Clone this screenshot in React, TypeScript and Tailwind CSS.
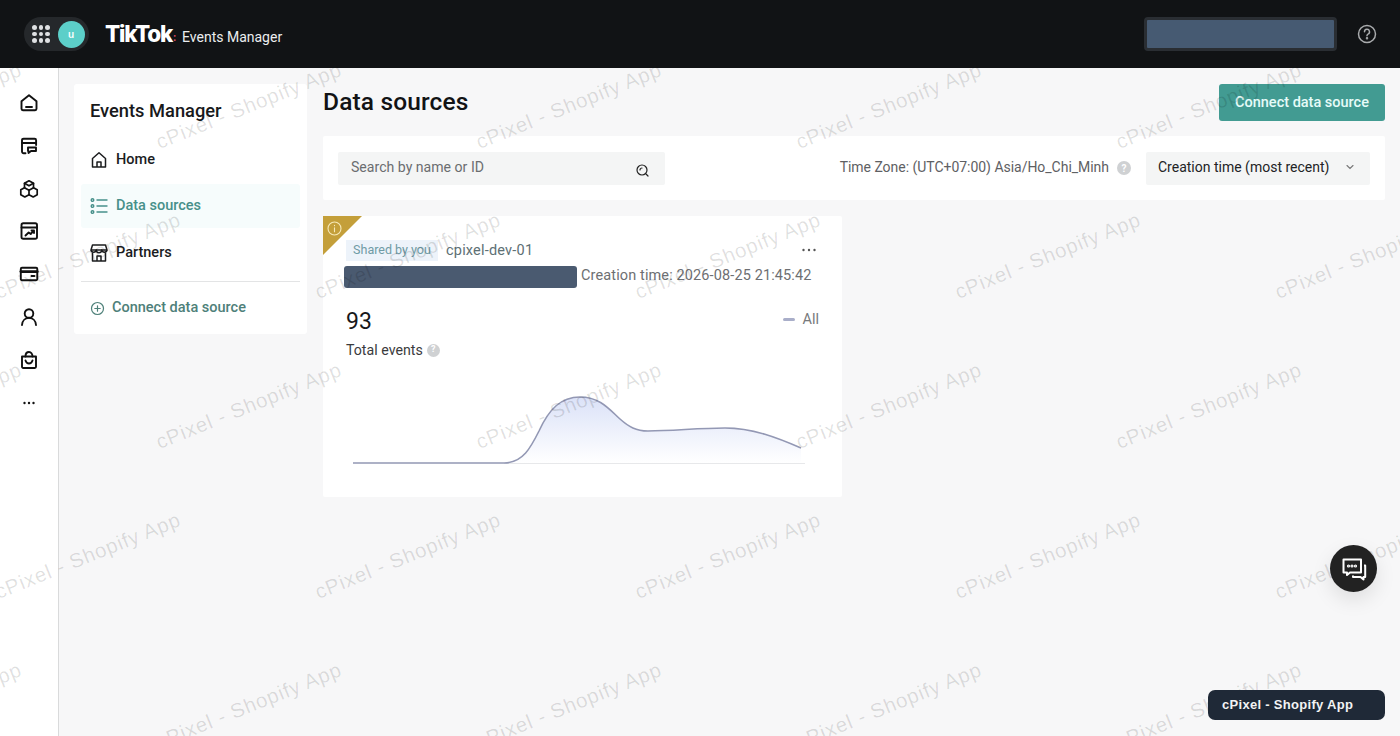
import React from "react";

const marks: [number, number][] = [];
for (let r = -1; r < 6; r++) {
  const odd = ((r % 2) + 2) % 2 === 1;
  for (let c = -1; c < 6; c++) {
    marks.push([(odd ? 88 : 249) + c * 320, 106 + r * 150]);
  }
}

function I({ children, s = 20, w = 1.9 }: { children: React.ReactNode; s?: number; w?: number }) {
  return (
    <svg width={s} height={s} viewBox="0 0 20 20" fill="none" stroke="currentColor" strokeWidth={w} strokeLinecap="round" strokeLinejoin="round">
      {children}
    </svg>
  );
}

const rail: React.ReactNode[] = [
  <I key="a"><path d="M2.500 8.300 10 2.300l7.500 6v7.500a1.400 1.400 0 0 1-1.400 1.400H3.900a1.400 1.400 0 0 1-1.400-1.400z" /><path d="M7 14h6" /></I>,
  <I key="b"><path d="M6.500 17.300H4.800A1.700 1.700 0 0 1 3 15.600V4.200c0-.9.700-1.500 1.600-1.500h11c.9 0 1.500.6 1.500 1.500V9" /><path d="M3 7h14" /><path d="M9 11.500h8v3.500h-5l-2.500 2v-2H9z" /></I>,
  <I key="c" w={1.7}><path d="M10 1.800 14.500 4.300v4.400L10 11.200 5.500 8.700V4.300z" /><path d="M5.500 8.700 1.800 10.800v4.900L5.800 18l4.200-2.300v-4.500" /><path d="M14.500 8.700l3.700 2.100v4.900L14.200 18 10 15.700" /><path d="M5.500 4.300 10 6.800l4.500-2.500" /></I>,
  <I key="d"><rect x="2.500" y="2.300" width="15.500" height="15.500" rx="1.800" /><path d="M2.500 6.500h15.500" /><path d="m6.500 14.500 3.200-3 2 1.500 3-3.300M12.500 9.500H15V12" /></I>,
  <I key="e"><rect x="1.800" y="3.800" width="16.500" height="12.500" rx="1.200" /><path d="M1.800 7.600h16.500" strokeWidth="2.600" /><path d="M12.500 12h3" /></I>,
  <I key="f"><circle cx="10" cy="6.500" r="4.300" /><path d="M3 18c.3-4.300 3.200-7.100 7-7.100s6.700 2.800 7 7.100" /></I>,
  <I key="g"><path d="M3 6.500h14v10.300a1.200 1.200 0 0 1-1.200 1.200H4.200A1.200 1.200 0 0 1 3 16.800z" /><path d="M6.500 6.500C6.500 3.800 8 2 10 2s3.500 1.800 3.500 4.500" /><path d="M6.500 10.500c.6 2 1.800 3 3.500 3s2.900-1 3.500-3" /></I>,
  <svg key="h" width="20" height="20" viewBox="0 0 20 20" fill="currentColor"><circle cx="5.500" cy="10" r="1.200" /><circle cx="10" cy="10" r="1.200" /><circle cx="14.500" cy="10" r="1.200" /></svg>,
];

function Help({ s = 14 }: { s?: number }) {
  return (
    <span className="flex items-center justify-center rounded-full bg-[#cfd1d3] font-bold text-white" style={{ width: s, height: s, fontSize: s - 4 }}>
      ?
    </span>
  );
}

export default function App() {
  return (
    <div className="relative flex h-[736px] w-[1400px] flex-col overflow-hidden bg-[#f7f7f8] font-['Roboto',sans-serif]">
      <header className="relative z-20 flex h-[68px] shrink-0 items-center justify-between bg-[#111315] pl-6 pr-[23px]">
        <div className="flex items-center">
          <div className="flex h-[34px] w-[65px] items-center rounded-full bg-[#25282b] pl-[8px]">
            <div className="grid grid-cols-3 gap-[2px]">
              {Array.from({ length: 9 }).map((_, i) => (
                <span key={i} className="h-[4.500px] w-[4.500px] rounded-full bg-[#dfe1e3]" />
              ))}
            </div>
            <div className="ml-[8px] flex h-[27px] w-[27px] items-center justify-center rounded-full bg-[#5ccfc9] font-['Inter',sans-serif] text-[10px] font-semibold text-white">
              u
            </div>
          </div>
          <span className="ml-4 font-['Inter',sans-serif] text-[22.500px] leading-none font-extrabold tracking-[-1.200px] text-white">TikTok</span>
          <span className="ml-[1px] mt-[8px] text-[10px] leading-none font-bold text-[#e8506a]">:</span>
          <span className="ml-[6px] mt-[5px] text-[14px] leading-none text-[#eceeef]">Events Manager</span>
        </div>
        <div className="flex items-center gap-[20px]">
          <div className="h-[34px] w-[193px] rounded-[4px] border-[3px] border-[#2a2e33] bg-[#465a72]" />
          <svg width="20" height="20" viewBox="0 0 20 20" fill="none" stroke="#a9abad" strokeWidth="1.500" strokeLinecap="round">
            <circle cx="10" cy="10" r="8.500" />
            <path d="M7.500 7.800A2.500 2.500 0 1 1 11 10.100c-.7.3-1 .8-1 1.600" />
            <circle cx="10" cy="14.300" r=".5" />
          </svg>
        </div>
      </header>

      <div className="flex min-h-0 flex-1">
        <nav className="z-0 flex w-[59px] shrink-0 flex-col items-center gap-[22.800px] border-r border-[#d9dadb] bg-white pt-[25px] text-[#111]">
          {rail.map((x, i) => (
            <div key={i} className="flex h-5 w-5 items-center justify-center">{x}</div>
          ))}
        </nav>

        <aside className="ml-[15px] mt-4 h-[250px] w-[233px] shrink-0 rounded-[3px] bg-white px-[7px] pt-[15px]">
          <h2 className="pl-[9px] text-[18.300px] leading-6 font-medium text-[#18191b]">Events Manager</h2>
          <div className="mt-[14px] flex h-[44px] items-center gap-[8px] pl-[9px] pt-[1px] text-[14.500px] font-medium text-[#1b1c1e]">
            <svg width="18" height="18" viewBox="0 0 18 18" fill="none" stroke="currentColor" strokeWidth="1.500" strokeLinejoin="round"><path d="M2.500 7.500 9 1.800l6.500 5.700V16h-13z" /><path d="M7 16v-5h4v5" /></svg>
            Home
          </div>
          <div className="mt-[3px] flex h-[44px] items-center gap-[8px] rounded-[3px] bg-[#f6fcfc] pl-[9px] text-[14.500px] font-medium text-[#47908a]">
            <svg width="18" height="18" viewBox="0 0 18 18" fill="none" stroke="currentColor" strokeWidth="1.400" strokeLinecap="round"><circle cx="2.500" cy="3" r="1.300" /><circle cx="2.500" cy="9" r="1.300" /><circle cx="2.500" cy="15" r="1.300" /><path d="M7 3h10M7 9h10M7 15h10" /></svg>
            Data sources
          </div>
          <div className="mt-[3px] flex h-[44px] items-center gap-[8px] pl-[9px] text-[14.500px] font-medium text-[#1b1c1e]">
            <svg width="18" height="20" viewBox="0 0 18 20" fill="none" stroke="currentColor" strokeWidth="1.500" strokeLinejoin="round"><path d="M2.500 2h13l1.500 5H1z" /><path d="M1 7a2.700 2.700 0 0 0 5.300 0 2.700 2.700 0 0 0 5.400 0 2.700 2.700 0 0 0 5.300 0" /><path d="M2.500 9.500V18h13V9.500" /><path d="M7 18v-5h4v5" /></svg>
            Partners
          </div>
          <div className="mt-[6px] border-t border-[#e3e4e5]" />
          <div className="flex h-[52px] items-center gap-[7px] pl-[9px] text-[14.500px] font-medium text-[#4e8079]">
            <svg width="15" height="15" viewBox="0 0 15 15" fill="none" stroke="currentColor" strokeWidth="1.200" strokeLinecap="round"><circle cx="7.500" cy="7.500" r="6" /><path d="M4.800 7.500h5.400M7.500 4.800v5.400" /></svg>
            Connect data source
          </div>
        </aside>

        <main className="ml-4 mr-[15px] flex min-w-0 flex-1 flex-col pt-4">
          <div className="flex h-[36px] items-start justify-between">
            <h1 className="mt-[2px] text-[24.500px] leading-[32px] font-medium tracking-[0.15px] text-[#121315]">Data sources</h1>
            <button className="h-[37px] w-[166px] rounded-[3px] bg-[#429b92] text-[14.500px] font-medium text-[#e6fbf9]">Connect data source</button>
          </div>

          <section className="mt-4 flex h-[64px] items-center justify-between rounded-[2px] bg-white px-[15px]">
            <div className="flex h-[33px] w-[327px] items-center justify-between rounded-[2px] bg-[#f4f5f5] pl-[13px] pr-[16px] text-[14.100px] text-[#6b6d70]">
              Search by name or ID
              <svg className="mt-[4px] text-[#222]" width="13" height="13" viewBox="0 0 13 13" fill="none" stroke="currentColor" strokeWidth="1.200" strokeLinecap="round"><circle cx="6" cy="6" r="5" /><path d="m10 10 2 2M4 6a2 2 0 0 1 2-2" /></svg>
            </div>
            <div className="flex items-center">
              <span className="mb-[2px] text-[14px] tracking-[-0.03px] text-[#5e6063]">Time Zone: (UTC+07:00) Asia/Ho_Chi_Minh</span>
              <span className="ml-[8px] mr-[15px]"><Help /></span>
              <div className="flex h-[33px] w-[224px] items-center justify-between rounded-[2px] bg-[#f4f5f5] pb-[2px] pl-[12px] pr-[15px] text-[14px] text-[#222325]">
                Creation time (most recent)
                <svg width="10" height="10" viewBox="0 0 10 10" fill="none" stroke="#777" strokeWidth="1.100" strokeLinecap="round"><path d="m2 3.500 3 3 3-3" /></svg>
              </div>
            </div>
          </section>

          <article className="relative mt-4 h-[281px] w-[519px] rounded-[2px] bg-white">
            <div className="absolute top-0 left-0 h-[39px] w-[39px] bg-[#c49f3a] [clip-path:polygon(0_0,100%_0,0_100%)]" />
            <svg className="absolute top-[5px] left-[4px]" width="15" height="15" viewBox="0 0 15 15" fill="none" stroke="#f6e9b8" strokeWidth="1.100" strokeLinecap="round"><circle cx="7.500" cy="7.500" r="6.500" /><path d="M7.500 6.800v4M7.500 4.200v.5" /></svg>
            <div className="flex items-center pl-[23px] pt-[23px]">
              <span className="flex h-[21px] w-[92px] items-center justify-center bg-[#edf3fa] text-[12.500px] text-[#6f9ba5]">Shared by you</span>
              <span className="ml-[8px] mt-[1px] text-[14.500px] tracking-[0.2px] text-[#5d7074]">cpixel-dev-01</span>
              <svg className="ml-auto mr-[25px]" width="16" height="16" viewBox="0 0 16 16" fill="#555"><circle cx="2.500" cy="8" r="1.200" /><circle cx="8" cy="8" r="1.200" /><circle cx="13.500" cy="8" r="1.200" /></svg>
            </div>
            <div className="mt-[3px] flex items-center pl-[21px]">
              <div className="h-[22px] w-[233px] rounded-[3px] bg-[#4a5a70]" />
              <span className="mb-[3px] ml-[4px] text-[14.500px] tracking-[0.12px] text-[#6d6f72]">Creation time: 2026-08-25 21:45:42</span>
            </div>
            <div className="mt-[17px] flex items-center justify-between pl-[23px] pr-[23px]">
              <span className="text-[23px] leading-[30px] text-[#17181a]">93</span>
              <span className="mb-[4px] flex items-center gap-[7px] text-[14.500px] text-[#77797c]">
                <span className="h-[3px] w-[12px] rounded-full bg-[#a9aec9]" />
                All
              </span>
            </div>
            <div className="mt-[3px] flex items-center gap-[4px] pl-[23px] text-[14.200px] text-[#3a3b3d]">
              Total events <Help s={13} />
            </div>
            <svg className="mt-[28px] ml-[30px]" width="454" height="80" viewBox="0 0 454 80" fill="none">
              <defs>
                <linearGradient id="g" x1="0" y1="0" x2="0" y2="1">
                  <stop offset="0" stopColor="#dbe2f8" />
                  <stop offset="1" stopColor="#ffffff" />
                </linearGradient>
              </defs>
              <path d="M0 74H151C170 74 178 58 186 42C196 20 208 8 227 8C247 8 256 20 267 30C276 38 283 42 295 42C320 42 345 39 372 39C400 39 425 49 448 59V74H0Z" fill="url(#g)" />
              <path d="M151 74.500H452" stroke="#e7e8ea" />
              <path d="M0 74H151C170 74 178 58 186 42C196 20 208 8 227 8C247 8 256 20 267 30C276 38 283 42 295 42C320 42 345 39 372 39C400 39 425 49 448 59" stroke="#9398b4" strokeWidth="1.600" />
            </svg>
          </article>
        </main>
      </div>

      {marks.map(([x, y], i) => (
        <span
          key={i}
          className="pointer-events-none absolute z-10 -translate-x-1/2 -translate-y-1/2 -rotate-[22deg] whitespace-nowrap font-['Liberation_Sans',sans-serif] text-[20.500px] tracking-[0.8px] text-black/12"
          style={{ left: x, top: y }}
        >
          cPixel - Shopify App
        </span>
      ))}

      <button className="absolute top-[545px] left-[1330px] z-20 flex h-[47px] w-[47px] items-center justify-center rounded-full bg-[#222] shadow-[0_8px_20px_rgba(0,0,0,0.1)]">
        <svg width="26" height="26" viewBox="0 0 26 26" fill="none" stroke="#fff" strokeWidth="2" strokeLinejoin="round">
          <path d="M2.500 3.500h17.500v13H9l-3 2.500v-2.500H2.500z" />
          <path d="M23 9.500h1.200v11.500H22.500v2.500L19.500 21H12v-1.500" />
          <circle cx="7.500" cy="10" r=".6" /><circle cx="11" cy="10" r=".6" /><circle cx="14.500" cy="10" r=".6" />
        </svg>
      </button>
      <div className="absolute top-[690px] left-[1208px] z-20 flex h-[30px] w-[177px] items-center rounded-[7px] bg-[#1f2937] pl-[14px] font-['Liberation_Sans',sans-serif] text-[13px] font-bold tracking-[0.3px] text-[#f2f3f4]">
        cPixel - Shopify App
      </div>
    </div>
  );
}
